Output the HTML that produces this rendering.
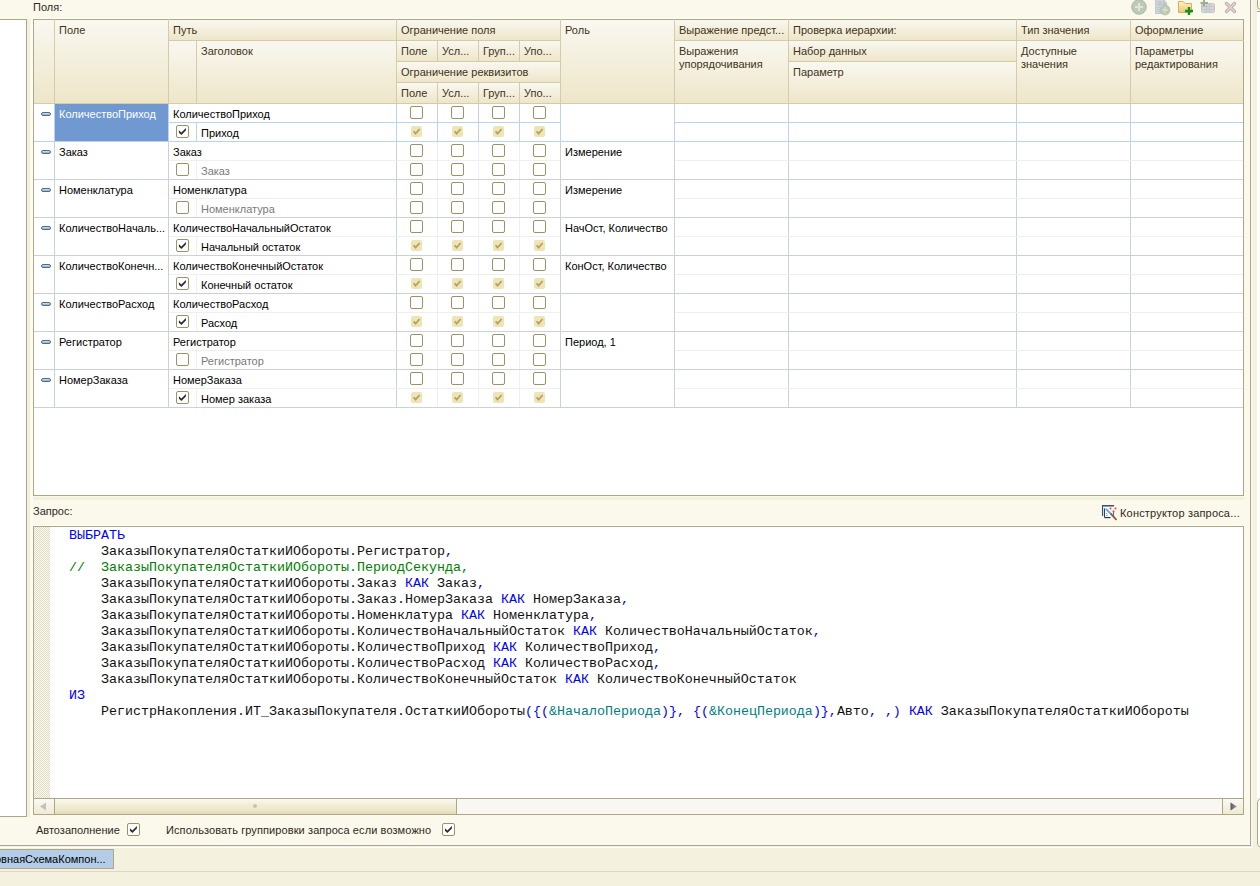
<!DOCTYPE html>
<html><head><meta charset="utf-8"><style>
*{margin:0;padding:0;box-sizing:border-box}
html,body{width:1260px;height:886px;overflow:hidden;background:#FBF9EB;font-family:"Liberation Sans",sans-serif;font-size:11px;color:#000}
.a{position:absolute}
.t{position:absolute;white-space:nowrap;line-height:13px;height:13px}
.hc{position:absolute;background:linear-gradient(#F9F8F0,#EEE6C9);color:#3A3018}
.cb{position:absolute;width:13px;height:13px;border:1px solid #9C9268;border-radius:2px;background:#fff}
.dc{position:absolute;width:11px;height:11px;border-radius:2px;background:#EEE4B5}
.mono{font-family:"Liberation Mono",monospace;font-size:13.333px;letter-spacing:0px;line-height:16px;white-space:pre;color:#111}
</style></head>
<body>
<div class="t" style="left:33px;top:1px;color:#30281A;">Поля:</div><div class="a" style="left:-1px;top:19px;width:28px;height:798px;background:#fff;border:1px solid #AFA783"></div><div class="a" style="left:27px;top:19px;width:4px;height:798px;background:linear-gradient(90deg,#F2EFDB,#F4F1DE 60%,#FBF9EC)"></div><div class="a" style="left:31px;top:19px;width:2px;height:798px;background:#FEFDF3"></div><div class="a" style="left:33px;top:19px;width:1211px;height:477px;background:#fff;border:1px solid #AFA783"></div><div class="hc" style="left:34px;top:20px;width:20px;height:83px"></div><div class="hc" style="left:55px;top:20px;width:113px;height:83px"></div><div class="a" style="left:59px;top:24px;line-height:13px;white-space:nowrap;color:#3F3318">Поле</div><div class="a" style="left:54px;top:19px;width:1px;height:85px;background:#D3CBAA"></div><div class="hc" style="left:169px;top:20px;width:227px;height:20px"></div><div class="a" style="left:173px;top:24px;line-height:13px;white-space:nowrap;color:#3F3318">Путь</div><div class="a" style="left:168px;top:19px;width:1px;height:22px;background:#D3CBAA"></div><div class="hc" style="left:169px;top:41px;width:27px;height:62px"></div><div class="a" style="left:168px;top:40px;width:1px;height:64px;background:#D3CBAA"></div><div class="a" style="left:168px;top:40px;width:29px;height:1px;background:#D3CBAA"></div><div class="hc" style="left:197px;top:41px;width:199px;height:62px"></div><div class="a" style="left:201px;top:45px;line-height:13px;white-space:nowrap;color:#3F3318">Заголовок</div><div class="a" style="left:196px;top:40px;width:1px;height:64px;background:#D3CBAA"></div><div class="a" style="left:196px;top:40px;width:201px;height:1px;background:#D3CBAA"></div><div class="hc" style="left:397px;top:20px;width:163px;height:20px"></div><div class="a" style="left:401px;top:24px;line-height:13px;white-space:nowrap;color:#3F3318">Ограничение поля</div><div class="a" style="left:396px;top:19px;width:1px;height:22px;background:#D3CBAA"></div><div class="hc" style="left:397px;top:41px;width:40px;height:20px"></div><div class="a" style="left:401px;top:45px;line-height:13px;white-space:nowrap;color:#3F3318">Поле</div><div class="a" style="left:396px;top:40px;width:1px;height:22px;background:#D3CBAA"></div><div class="a" style="left:396px;top:40px;width:42px;height:1px;background:#D3CBAA"></div><div class="hc" style="left:438px;top:41px;width:40px;height:20px"></div><div class="a" style="left:442px;top:45px;line-height:13px;white-space:nowrap;color:#3F3318">Усл...</div><div class="a" style="left:437px;top:40px;width:1px;height:22px;background:#D3CBAA"></div><div class="a" style="left:437px;top:40px;width:42px;height:1px;background:#D3CBAA"></div><div class="hc" style="left:479px;top:41px;width:40px;height:20px"></div><div class="a" style="left:483px;top:45px;line-height:13px;white-space:nowrap;color:#3F3318">Груп...</div><div class="a" style="left:478px;top:40px;width:1px;height:22px;background:#D3CBAA"></div><div class="a" style="left:478px;top:40px;width:42px;height:1px;background:#D3CBAA"></div><div class="hc" style="left:520px;top:41px;width:40px;height:20px"></div><div class="a" style="left:524px;top:45px;line-height:13px;white-space:nowrap;color:#3F3318">Упо...</div><div class="a" style="left:519px;top:40px;width:1px;height:22px;background:#D3CBAA"></div><div class="a" style="left:519px;top:40px;width:42px;height:1px;background:#D3CBAA"></div><div class="hc" style="left:397px;top:62px;width:163px;height:20px"></div><div class="a" style="left:401px;top:66px;line-height:13px;white-space:nowrap;color:#3F3318">Ограничение реквизитов</div><div class="a" style="left:396px;top:61px;width:1px;height:22px;background:#D3CBAA"></div><div class="a" style="left:396px;top:61px;width:165px;height:1px;background:#D3CBAA"></div><div class="hc" style="left:397px;top:83px;width:40px;height:20px"></div><div class="a" style="left:401px;top:87px;line-height:13px;white-space:nowrap;color:#3F3318">Поле</div><div class="a" style="left:396px;top:82px;width:1px;height:22px;background:#D3CBAA"></div><div class="a" style="left:396px;top:82px;width:42px;height:1px;background:#D3CBAA"></div><div class="hc" style="left:438px;top:83px;width:40px;height:20px"></div><div class="a" style="left:442px;top:87px;line-height:13px;white-space:nowrap;color:#3F3318">Усл...</div><div class="a" style="left:437px;top:82px;width:1px;height:22px;background:#D3CBAA"></div><div class="a" style="left:437px;top:82px;width:42px;height:1px;background:#D3CBAA"></div><div class="hc" style="left:479px;top:83px;width:40px;height:20px"></div><div class="a" style="left:483px;top:87px;line-height:13px;white-space:nowrap;color:#3F3318">Груп...</div><div class="a" style="left:478px;top:82px;width:1px;height:22px;background:#D3CBAA"></div><div class="a" style="left:478px;top:82px;width:42px;height:1px;background:#D3CBAA"></div><div class="hc" style="left:520px;top:83px;width:40px;height:20px"></div><div class="a" style="left:524px;top:87px;line-height:13px;white-space:nowrap;color:#3F3318">Упо...</div><div class="a" style="left:519px;top:82px;width:1px;height:22px;background:#D3CBAA"></div><div class="a" style="left:519px;top:82px;width:42px;height:1px;background:#D3CBAA"></div><div class="hc" style="left:561px;top:20px;width:113px;height:83px"></div><div class="a" style="left:565px;top:24px;line-height:13px;white-space:nowrap;color:#3F3318">Роль</div><div class="a" style="left:560px;top:19px;width:1px;height:85px;background:#D3CBAA"></div><div class="hc" style="left:675px;top:20px;width:113px;height:20px"></div><div class="a" style="left:679px;top:24px;line-height:13px;white-space:nowrap;color:#3F3318">Выражение предст...</div><div class="a" style="left:674px;top:19px;width:1px;height:22px;background:#D3CBAA"></div><div class="hc" style="left:675px;top:41px;width:113px;height:62px"></div><div class="a" style="left:679px;top:45px;line-height:13px;white-space:nowrap;color:#3F3318">Выражения<br>упорядочивания</div><div class="a" style="left:674px;top:40px;width:1px;height:64px;background:#D3CBAA"></div><div class="a" style="left:674px;top:40px;width:115px;height:1px;background:#D3CBAA"></div><div class="hc" style="left:789px;top:20px;width:227px;height:20px"></div><div class="a" style="left:793px;top:24px;line-height:13px;white-space:nowrap;color:#3F3318">Проверка иерархии:</div><div class="a" style="left:788px;top:19px;width:1px;height:22px;background:#D3CBAA"></div><div class="hc" style="left:789px;top:41px;width:227px;height:20px"></div><div class="a" style="left:793px;top:45px;line-height:13px;white-space:nowrap;color:#3F3318">Набор данных</div><div class="a" style="left:788px;top:40px;width:1px;height:22px;background:#D3CBAA"></div><div class="a" style="left:788px;top:40px;width:229px;height:1px;background:#D3CBAA"></div><div class="hc" style="left:789px;top:62px;width:227px;height:41px"></div><div class="a" style="left:793px;top:66px;line-height:13px;white-space:nowrap;color:#3F3318">Параметр</div><div class="a" style="left:788px;top:61px;width:1px;height:43px;background:#D3CBAA"></div><div class="a" style="left:788px;top:61px;width:229px;height:1px;background:#D3CBAA"></div><div class="hc" style="left:1017px;top:20px;width:113px;height:20px"></div><div class="a" style="left:1021px;top:24px;line-height:13px;white-space:nowrap;color:#3F3318">Тип значения</div><div class="a" style="left:1016px;top:19px;width:1px;height:22px;background:#D3CBAA"></div><div class="hc" style="left:1017px;top:41px;width:113px;height:62px"></div><div class="a" style="left:1021px;top:45px;line-height:13px;white-space:nowrap;color:#3F3318">Доступные<br>значения</div><div class="a" style="left:1016px;top:40px;width:1px;height:64px;background:#D3CBAA"></div><div class="a" style="left:1016px;top:40px;width:115px;height:1px;background:#D3CBAA"></div><div class="hc" style="left:1131px;top:20px;width:112px;height:20px"></div><div class="a" style="left:1135px;top:24px;line-height:13px;white-space:nowrap;color:#3F3318">Оформление</div><div class="a" style="left:1130px;top:19px;width:1px;height:22px;background:#D3CBAA"></div><div class="hc" style="left:1131px;top:41px;width:112px;height:62px"></div><div class="a" style="left:1135px;top:45px;line-height:13px;white-space:nowrap;color:#3F3318">Параметры<br>редактирования</div><div class="a" style="left:1130px;top:40px;width:1px;height:64px;background:#D3CBAA"></div><div class="a" style="left:1130px;top:40px;width:114px;height:1px;background:#D3CBAA"></div><div class="a" style="left:34px;top:103px;width:1209px;height:1px;background:#D3CBAA"></div><div class="a" style="left:54px;top:104px;width:1px;height:37px;background:#BDD2EE"></div><div class="a" style="left:168px;top:104px;width:1px;height:37px;background:#BDD2EE"></div><div class="a" style="left:396px;top:104px;width:1px;height:37px;background:#BDD2EE"></div><div class="a" style="left:560px;top:104px;width:1px;height:37px;background:#BDD2EE"></div><div class="a" style="left:674px;top:104px;width:1px;height:37px;background:#BDD2EE"></div><div class="a" style="left:788px;top:104px;width:1px;height:37px;background:#BDD2EE"></div><div class="a" style="left:1016px;top:104px;width:1px;height:37px;background:#BDD2EE"></div><div class="a" style="left:1130px;top:104px;width:1px;height:37px;background:#BDD2EE"></div><div class="a" style="left:437px;top:104px;width:1px;height:37px;background:#BDD2EE"></div><div class="a" style="left:478px;top:104px;width:1px;height:37px;background:#BDD2EE"></div><div class="a" style="left:519px;top:104px;width:1px;height:37px;background:#BDD2EE"></div><div class="a" style="left:196px;top:123px;width:1px;height:18px;background:#BDD2EE"></div><div class="a" style="left:169px;top:122px;width:391px;height:1px;background:#BDD2EE"></div><div class="a" style="left:675px;top:122px;width:568px;height:1px;background:#BDD2EE"></div><div class="a" style="left:34px;top:141px;width:1209px;height:1px;background:#BDD2EE"></div><div class="a" style="left:41px;top:112px;width:10px;height:4px;border-radius:2px;background:linear-gradient(#D8E6F2,#8FA9C0);border:1px solid #4F6D88"></div><div class="a" style="left:55px;top:104px;width:113px;height:37px;background:#7099D1"></div><div class="t" style="left:59px;top:108px;color:#fff;">КоличествоПриход</div><div class="t" style="left:173px;top:108px;">КоличествоПриход</div><div class="cb" style="left:176px;top:125px"><svg width="13" height="13" style="position:absolute;left:-1px;top:-1px"><path d="M2.9 5.2 L5.4 7.5 L9.9 2.9 L9.9 5.6 L5.4 10 L2.9 7.7 Z" fill="#2E2E2E"/></svg></div><div class="t" style="left:201px;top:127px;">Приход</div><div class="cb" style="left:410px;top:106px"></div><div class="dc" style="left:411px;top:126px"><svg width="11" height="11" style="position:absolute;left:0;top:0"><path d="M2.6 5.2 L4.6 7.6 L8.6 3.0" fill="none" stroke="#B2A262" stroke-width="1.7"/></svg></div><div class="cb" style="left:451px;top:106px"></div><div class="dc" style="left:452px;top:126px"><svg width="11" height="11" style="position:absolute;left:0;top:0"><path d="M2.6 5.2 L4.6 7.6 L8.6 3.0" fill="none" stroke="#B2A262" stroke-width="1.7"/></svg></div><div class="cb" style="left:492px;top:106px"></div><div class="dc" style="left:493px;top:126px"><svg width="11" height="11" style="position:absolute;left:0;top:0"><path d="M2.6 5.2 L4.6 7.6 L8.6 3.0" fill="none" stroke="#B2A262" stroke-width="1.7"/></svg></div><div class="cb" style="left:533px;top:106px"></div><div class="dc" style="left:534px;top:126px"><svg width="11" height="11" style="position:absolute;left:0;top:0"><path d="M2.6 5.2 L4.6 7.6 L8.6 3.0" fill="none" stroke="#B2A262" stroke-width="1.7"/></svg></div><div class="a" style="left:54px;top:142px;width:1px;height:37px;background:#CBD1D8"></div><div class="a" style="left:168px;top:142px;width:1px;height:37px;background:#CBD1D8"></div><div class="a" style="left:396px;top:142px;width:1px;height:37px;background:#CBD1D8"></div><div class="a" style="left:560px;top:142px;width:1px;height:37px;background:#CBD1D8"></div><div class="a" style="left:674px;top:142px;width:1px;height:37px;background:#CBD1D8"></div><div class="a" style="left:788px;top:142px;width:1px;height:37px;background:#CBD1D8"></div><div class="a" style="left:1016px;top:142px;width:1px;height:37px;background:#CBD1D8"></div><div class="a" style="left:1130px;top:142px;width:1px;height:37px;background:#CBD1D8"></div><div class="a" style="left:437px;top:142px;width:1px;height:37px;background:#EFEFEF"></div><div class="a" style="left:478px;top:142px;width:1px;height:37px;background:#EFEFEF"></div><div class="a" style="left:519px;top:142px;width:1px;height:37px;background:#EFEFEF"></div><div class="a" style="left:196px;top:161px;width:1px;height:18px;background:#EFEFEF"></div><div class="a" style="left:169px;top:160px;width:391px;height:1px;background:#EFEFEF"></div><div class="a" style="left:675px;top:160px;width:568px;height:1px;background:#EFEFEF"></div><div class="a" style="left:34px;top:179px;width:1209px;height:1px;background:#CBD1D8"></div><div class="a" style="left:41px;top:150px;width:10px;height:4px;border-radius:2px;background:linear-gradient(#D8E6F2,#8FA9C0);border:1px solid #4F6D88"></div><div class="t" style="left:59px;top:146px;">Заказ</div><div class="t" style="left:173px;top:146px;">Заказ</div><div class="cb" style="left:176px;top:163px"></div><div class="t" style="left:201px;top:165px;color:#7A7A7A;">Заказ</div><div class="cb" style="left:410px;top:144px"></div><div class="cb" style="left:410px;top:163px"></div><div class="cb" style="left:451px;top:144px"></div><div class="cb" style="left:451px;top:163px"></div><div class="cb" style="left:492px;top:144px"></div><div class="cb" style="left:492px;top:163px"></div><div class="cb" style="left:533px;top:144px"></div><div class="cb" style="left:533px;top:163px"></div><div class="t" style="left:565px;top:146px;">Измерение</div><div class="a" style="left:54px;top:180px;width:1px;height:37px;background:#CBD1D8"></div><div class="a" style="left:168px;top:180px;width:1px;height:37px;background:#CBD1D8"></div><div class="a" style="left:396px;top:180px;width:1px;height:37px;background:#CBD1D8"></div><div class="a" style="left:560px;top:180px;width:1px;height:37px;background:#CBD1D8"></div><div class="a" style="left:674px;top:180px;width:1px;height:37px;background:#CBD1D8"></div><div class="a" style="left:788px;top:180px;width:1px;height:37px;background:#CBD1D8"></div><div class="a" style="left:1016px;top:180px;width:1px;height:37px;background:#CBD1D8"></div><div class="a" style="left:1130px;top:180px;width:1px;height:37px;background:#CBD1D8"></div><div class="a" style="left:437px;top:180px;width:1px;height:37px;background:#EFEFEF"></div><div class="a" style="left:478px;top:180px;width:1px;height:37px;background:#EFEFEF"></div><div class="a" style="left:519px;top:180px;width:1px;height:37px;background:#EFEFEF"></div><div class="a" style="left:196px;top:199px;width:1px;height:18px;background:#EFEFEF"></div><div class="a" style="left:169px;top:198px;width:391px;height:1px;background:#EFEFEF"></div><div class="a" style="left:675px;top:198px;width:568px;height:1px;background:#EFEFEF"></div><div class="a" style="left:34px;top:217px;width:1209px;height:1px;background:#CBD1D8"></div><div class="a" style="left:41px;top:188px;width:10px;height:4px;border-radius:2px;background:linear-gradient(#D8E6F2,#8FA9C0);border:1px solid #4F6D88"></div><div class="t" style="left:59px;top:184px;">Номенклатура</div><div class="t" style="left:173px;top:184px;">Номенклатура</div><div class="cb" style="left:176px;top:201px"></div><div class="t" style="left:201px;top:203px;color:#7A7A7A;">Номенклатура</div><div class="cb" style="left:410px;top:182px"></div><div class="cb" style="left:410px;top:201px"></div><div class="cb" style="left:451px;top:182px"></div><div class="cb" style="left:451px;top:201px"></div><div class="cb" style="left:492px;top:182px"></div><div class="cb" style="left:492px;top:201px"></div><div class="cb" style="left:533px;top:182px"></div><div class="cb" style="left:533px;top:201px"></div><div class="t" style="left:565px;top:184px;">Измерение</div><div class="a" style="left:54px;top:218px;width:1px;height:37px;background:#CBD1D8"></div><div class="a" style="left:168px;top:218px;width:1px;height:37px;background:#CBD1D8"></div><div class="a" style="left:396px;top:218px;width:1px;height:37px;background:#CBD1D8"></div><div class="a" style="left:560px;top:218px;width:1px;height:37px;background:#CBD1D8"></div><div class="a" style="left:674px;top:218px;width:1px;height:37px;background:#CBD1D8"></div><div class="a" style="left:788px;top:218px;width:1px;height:37px;background:#CBD1D8"></div><div class="a" style="left:1016px;top:218px;width:1px;height:37px;background:#CBD1D8"></div><div class="a" style="left:1130px;top:218px;width:1px;height:37px;background:#CBD1D8"></div><div class="a" style="left:437px;top:218px;width:1px;height:37px;background:#EFEFEF"></div><div class="a" style="left:478px;top:218px;width:1px;height:37px;background:#EFEFEF"></div><div class="a" style="left:519px;top:218px;width:1px;height:37px;background:#EFEFEF"></div><div class="a" style="left:196px;top:237px;width:1px;height:18px;background:#EFEFEF"></div><div class="a" style="left:169px;top:236px;width:391px;height:1px;background:#EFEFEF"></div><div class="a" style="left:675px;top:236px;width:568px;height:1px;background:#EFEFEF"></div><div class="a" style="left:34px;top:255px;width:1209px;height:1px;background:#CBD1D8"></div><div class="a" style="left:41px;top:226px;width:10px;height:4px;border-radius:2px;background:linear-gradient(#D8E6F2,#8FA9C0);border:1px solid #4F6D88"></div><div class="t" style="left:59px;top:222px;">КоличествоНачаль...</div><div class="t" style="left:173px;top:222px;">КоличествоНачальныйОстаток</div><div class="cb" style="left:176px;top:239px"><svg width="13" height="13" style="position:absolute;left:-1px;top:-1px"><path d="M2.9 5.2 L5.4 7.5 L9.9 2.9 L9.9 5.6 L5.4 10 L2.9 7.7 Z" fill="#2E2E2E"/></svg></div><div class="t" style="left:201px;top:241px;">Начальный остаток</div><div class="cb" style="left:410px;top:220px"></div><div class="dc" style="left:411px;top:240px"><svg width="11" height="11" style="position:absolute;left:0;top:0"><path d="M2.6 5.2 L4.6 7.6 L8.6 3.0" fill="none" stroke="#B2A262" stroke-width="1.7"/></svg></div><div class="cb" style="left:451px;top:220px"></div><div class="dc" style="left:452px;top:240px"><svg width="11" height="11" style="position:absolute;left:0;top:0"><path d="M2.6 5.2 L4.6 7.6 L8.6 3.0" fill="none" stroke="#B2A262" stroke-width="1.7"/></svg></div><div class="cb" style="left:492px;top:220px"></div><div class="dc" style="left:493px;top:240px"><svg width="11" height="11" style="position:absolute;left:0;top:0"><path d="M2.6 5.2 L4.6 7.6 L8.6 3.0" fill="none" stroke="#B2A262" stroke-width="1.7"/></svg></div><div class="cb" style="left:533px;top:220px"></div><div class="dc" style="left:534px;top:240px"><svg width="11" height="11" style="position:absolute;left:0;top:0"><path d="M2.6 5.2 L4.6 7.6 L8.6 3.0" fill="none" stroke="#B2A262" stroke-width="1.7"/></svg></div><div class="t" style="left:565px;top:222px;">НачОст, Количество</div><div class="a" style="left:54px;top:256px;width:1px;height:37px;background:#CBD1D8"></div><div class="a" style="left:168px;top:256px;width:1px;height:37px;background:#CBD1D8"></div><div class="a" style="left:396px;top:256px;width:1px;height:37px;background:#CBD1D8"></div><div class="a" style="left:560px;top:256px;width:1px;height:37px;background:#CBD1D8"></div><div class="a" style="left:674px;top:256px;width:1px;height:37px;background:#CBD1D8"></div><div class="a" style="left:788px;top:256px;width:1px;height:37px;background:#CBD1D8"></div><div class="a" style="left:1016px;top:256px;width:1px;height:37px;background:#CBD1D8"></div><div class="a" style="left:1130px;top:256px;width:1px;height:37px;background:#CBD1D8"></div><div class="a" style="left:437px;top:256px;width:1px;height:37px;background:#EFEFEF"></div><div class="a" style="left:478px;top:256px;width:1px;height:37px;background:#EFEFEF"></div><div class="a" style="left:519px;top:256px;width:1px;height:37px;background:#EFEFEF"></div><div class="a" style="left:196px;top:275px;width:1px;height:18px;background:#EFEFEF"></div><div class="a" style="left:169px;top:274px;width:391px;height:1px;background:#EFEFEF"></div><div class="a" style="left:675px;top:274px;width:568px;height:1px;background:#EFEFEF"></div><div class="a" style="left:34px;top:293px;width:1209px;height:1px;background:#CBD1D8"></div><div class="a" style="left:41px;top:264px;width:10px;height:4px;border-radius:2px;background:linear-gradient(#D8E6F2,#8FA9C0);border:1px solid #4F6D88"></div><div class="t" style="left:59px;top:260px;">КоличествоКонечн...</div><div class="t" style="left:173px;top:260px;">КоличествоКонечныйОстаток</div><div class="cb" style="left:176px;top:277px"><svg width="13" height="13" style="position:absolute;left:-1px;top:-1px"><path d="M2.9 5.2 L5.4 7.5 L9.9 2.9 L9.9 5.6 L5.4 10 L2.9 7.7 Z" fill="#2E2E2E"/></svg></div><div class="t" style="left:201px;top:279px;">Конечный остаток</div><div class="cb" style="left:410px;top:258px"></div><div class="dc" style="left:411px;top:278px"><svg width="11" height="11" style="position:absolute;left:0;top:0"><path d="M2.6 5.2 L4.6 7.6 L8.6 3.0" fill="none" stroke="#B2A262" stroke-width="1.7"/></svg></div><div class="cb" style="left:451px;top:258px"></div><div class="dc" style="left:452px;top:278px"><svg width="11" height="11" style="position:absolute;left:0;top:0"><path d="M2.6 5.2 L4.6 7.6 L8.6 3.0" fill="none" stroke="#B2A262" stroke-width="1.7"/></svg></div><div class="cb" style="left:492px;top:258px"></div><div class="dc" style="left:493px;top:278px"><svg width="11" height="11" style="position:absolute;left:0;top:0"><path d="M2.6 5.2 L4.6 7.6 L8.6 3.0" fill="none" stroke="#B2A262" stroke-width="1.7"/></svg></div><div class="cb" style="left:533px;top:258px"></div><div class="dc" style="left:534px;top:278px"><svg width="11" height="11" style="position:absolute;left:0;top:0"><path d="M2.6 5.2 L4.6 7.6 L8.6 3.0" fill="none" stroke="#B2A262" stroke-width="1.7"/></svg></div><div class="t" style="left:565px;top:260px;">КонОст, Количество</div><div class="a" style="left:54px;top:294px;width:1px;height:37px;background:#CBD1D8"></div><div class="a" style="left:168px;top:294px;width:1px;height:37px;background:#CBD1D8"></div><div class="a" style="left:396px;top:294px;width:1px;height:37px;background:#CBD1D8"></div><div class="a" style="left:560px;top:294px;width:1px;height:37px;background:#CBD1D8"></div><div class="a" style="left:674px;top:294px;width:1px;height:37px;background:#CBD1D8"></div><div class="a" style="left:788px;top:294px;width:1px;height:37px;background:#CBD1D8"></div><div class="a" style="left:1016px;top:294px;width:1px;height:37px;background:#CBD1D8"></div><div class="a" style="left:1130px;top:294px;width:1px;height:37px;background:#CBD1D8"></div><div class="a" style="left:437px;top:294px;width:1px;height:37px;background:#EFEFEF"></div><div class="a" style="left:478px;top:294px;width:1px;height:37px;background:#EFEFEF"></div><div class="a" style="left:519px;top:294px;width:1px;height:37px;background:#EFEFEF"></div><div class="a" style="left:196px;top:313px;width:1px;height:18px;background:#EFEFEF"></div><div class="a" style="left:169px;top:312px;width:391px;height:1px;background:#EFEFEF"></div><div class="a" style="left:675px;top:312px;width:568px;height:1px;background:#EFEFEF"></div><div class="a" style="left:34px;top:331px;width:1209px;height:1px;background:#CBD1D8"></div><div class="a" style="left:41px;top:302px;width:10px;height:4px;border-radius:2px;background:linear-gradient(#D8E6F2,#8FA9C0);border:1px solid #4F6D88"></div><div class="t" style="left:59px;top:298px;">КоличествоРасход</div><div class="t" style="left:173px;top:298px;">КоличествоРасход</div><div class="cb" style="left:176px;top:315px"><svg width="13" height="13" style="position:absolute;left:-1px;top:-1px"><path d="M2.9 5.2 L5.4 7.5 L9.9 2.9 L9.9 5.6 L5.4 10 L2.9 7.7 Z" fill="#2E2E2E"/></svg></div><div class="t" style="left:201px;top:317px;">Расход</div><div class="cb" style="left:410px;top:296px"></div><div class="dc" style="left:411px;top:316px"><svg width="11" height="11" style="position:absolute;left:0;top:0"><path d="M2.6 5.2 L4.6 7.6 L8.6 3.0" fill="none" stroke="#B2A262" stroke-width="1.7"/></svg></div><div class="cb" style="left:451px;top:296px"></div><div class="dc" style="left:452px;top:316px"><svg width="11" height="11" style="position:absolute;left:0;top:0"><path d="M2.6 5.2 L4.6 7.6 L8.6 3.0" fill="none" stroke="#B2A262" stroke-width="1.7"/></svg></div><div class="cb" style="left:492px;top:296px"></div><div class="dc" style="left:493px;top:316px"><svg width="11" height="11" style="position:absolute;left:0;top:0"><path d="M2.6 5.2 L4.6 7.6 L8.6 3.0" fill="none" stroke="#B2A262" stroke-width="1.7"/></svg></div><div class="cb" style="left:533px;top:296px"></div><div class="dc" style="left:534px;top:316px"><svg width="11" height="11" style="position:absolute;left:0;top:0"><path d="M2.6 5.2 L4.6 7.6 L8.6 3.0" fill="none" stroke="#B2A262" stroke-width="1.7"/></svg></div><div class="a" style="left:54px;top:332px;width:1px;height:37px;background:#CBD1D8"></div><div class="a" style="left:168px;top:332px;width:1px;height:37px;background:#CBD1D8"></div><div class="a" style="left:396px;top:332px;width:1px;height:37px;background:#CBD1D8"></div><div class="a" style="left:560px;top:332px;width:1px;height:37px;background:#CBD1D8"></div><div class="a" style="left:674px;top:332px;width:1px;height:37px;background:#CBD1D8"></div><div class="a" style="left:788px;top:332px;width:1px;height:37px;background:#CBD1D8"></div><div class="a" style="left:1016px;top:332px;width:1px;height:37px;background:#CBD1D8"></div><div class="a" style="left:1130px;top:332px;width:1px;height:37px;background:#CBD1D8"></div><div class="a" style="left:437px;top:332px;width:1px;height:37px;background:#EFEFEF"></div><div class="a" style="left:478px;top:332px;width:1px;height:37px;background:#EFEFEF"></div><div class="a" style="left:519px;top:332px;width:1px;height:37px;background:#EFEFEF"></div><div class="a" style="left:196px;top:351px;width:1px;height:18px;background:#EFEFEF"></div><div class="a" style="left:169px;top:350px;width:391px;height:1px;background:#EFEFEF"></div><div class="a" style="left:675px;top:350px;width:568px;height:1px;background:#EFEFEF"></div><div class="a" style="left:34px;top:369px;width:1209px;height:1px;background:#CBD1D8"></div><div class="a" style="left:41px;top:340px;width:10px;height:4px;border-radius:2px;background:linear-gradient(#D8E6F2,#8FA9C0);border:1px solid #4F6D88"></div><div class="t" style="left:59px;top:336px;">Регистратор</div><div class="t" style="left:173px;top:336px;">Регистратор</div><div class="cb" style="left:176px;top:353px"></div><div class="t" style="left:201px;top:355px;color:#7A7A7A;">Регистратор</div><div class="cb" style="left:410px;top:334px"></div><div class="cb" style="left:410px;top:353px"></div><div class="cb" style="left:451px;top:334px"></div><div class="cb" style="left:451px;top:353px"></div><div class="cb" style="left:492px;top:334px"></div><div class="cb" style="left:492px;top:353px"></div><div class="cb" style="left:533px;top:334px"></div><div class="cb" style="left:533px;top:353px"></div><div class="t" style="left:565px;top:336px;">Период, 1</div><div class="a" style="left:54px;top:370px;width:1px;height:37px;background:#CBD1D8"></div><div class="a" style="left:168px;top:370px;width:1px;height:37px;background:#CBD1D8"></div><div class="a" style="left:396px;top:370px;width:1px;height:37px;background:#CBD1D8"></div><div class="a" style="left:560px;top:370px;width:1px;height:37px;background:#CBD1D8"></div><div class="a" style="left:674px;top:370px;width:1px;height:37px;background:#CBD1D8"></div><div class="a" style="left:788px;top:370px;width:1px;height:37px;background:#CBD1D8"></div><div class="a" style="left:1016px;top:370px;width:1px;height:37px;background:#CBD1D8"></div><div class="a" style="left:1130px;top:370px;width:1px;height:37px;background:#CBD1D8"></div><div class="a" style="left:437px;top:370px;width:1px;height:37px;background:#EFEFEF"></div><div class="a" style="left:478px;top:370px;width:1px;height:37px;background:#EFEFEF"></div><div class="a" style="left:519px;top:370px;width:1px;height:37px;background:#EFEFEF"></div><div class="a" style="left:196px;top:389px;width:1px;height:18px;background:#EFEFEF"></div><div class="a" style="left:169px;top:388px;width:391px;height:1px;background:#EFEFEF"></div><div class="a" style="left:675px;top:388px;width:568px;height:1px;background:#EFEFEF"></div><div class="a" style="left:34px;top:407px;width:1209px;height:1px;background:#CBD1D8"></div><div class="a" style="left:41px;top:378px;width:10px;height:4px;border-radius:2px;background:linear-gradient(#D8E6F2,#8FA9C0);border:1px solid #4F6D88"></div><div class="t" style="left:59px;top:374px;">НомерЗаказа</div><div class="t" style="left:173px;top:374px;">НомерЗаказа</div><div class="cb" style="left:176px;top:391px"><svg width="13" height="13" style="position:absolute;left:-1px;top:-1px"><path d="M2.9 5.2 L5.4 7.5 L9.9 2.9 L9.9 5.6 L5.4 10 L2.9 7.7 Z" fill="#2E2E2E"/></svg></div><div class="t" style="left:201px;top:393px;">Номер заказа</div><div class="cb" style="left:410px;top:372px"></div><div class="dc" style="left:411px;top:392px"><svg width="11" height="11" style="position:absolute;left:0;top:0"><path d="M2.6 5.2 L4.6 7.6 L8.6 3.0" fill="none" stroke="#B2A262" stroke-width="1.7"/></svg></div><div class="cb" style="left:451px;top:372px"></div><div class="dc" style="left:452px;top:392px"><svg width="11" height="11" style="position:absolute;left:0;top:0"><path d="M2.6 5.2 L4.6 7.6 L8.6 3.0" fill="none" stroke="#B2A262" stroke-width="1.7"/></svg></div><div class="cb" style="left:492px;top:372px"></div><div class="dc" style="left:493px;top:392px"><svg width="11" height="11" style="position:absolute;left:0;top:0"><path d="M2.6 5.2 L4.6 7.6 L8.6 3.0" fill="none" stroke="#B2A262" stroke-width="1.7"/></svg></div><div class="cb" style="left:533px;top:372px"></div><div class="dc" style="left:534px;top:392px"><svg width="11" height="11" style="position:absolute;left:0;top:0"><path d="M2.6 5.2 L4.6 7.6 L8.6 3.0" fill="none" stroke="#B2A262" stroke-width="1.7"/></svg></div><div class="a" style="left:33px;top:18px;width:1211px;height:1px;background:#FFFFF6"></div><div class="a" style="left:33px;top:525px;width:1211px;height:1px;background:#FFFFF6"></div><div class="a" style="left:33px;top:497px;width:1211px;height:3px;background:#F3F0DC"></div><div class="t" style="left:33px;top:505px;color:#30281A;">Запрос:</div><div class="t" style="left:1120px;top:507px;color:#30281A;letter-spacing:0.18px;">Конструктор запроса...</div><svg class="a" style="left:1098px;top:502px" width="22" height="20"><path d="M4.5 14 V3.5 H15.5 V4.5" fill="none" stroke="#3F5275" stroke-width="1.1"/><path d="M5 4 H15 V5 H5 Z" fill="#8FA0BC"/><rect x="5.2" y="5.5" width="1.6" height="8" fill="#CFE3F2"/><path d="M6.5 15.5 H12.5" stroke="#22365A" stroke-width="1.3"/><path d="M6.5 6.5 V15.5" stroke="#2A3E62" stroke-width="1.1"/><rect x="7" y="6.8" width="5" height="8.2" fill="#F3F9FD"/><path d="M8 11.5 H9.3 M8 13.5 H9.8" stroke="#8794AA" stroke-width="0.8"/><path d="M15.5 8.5 V14" stroke="#5B6F92" stroke-width="1.1"/><path d="M8.3 7.3 L13.2 12.2" stroke="#5AA5DD" stroke-width="1.7" stroke-linecap="round"/><path d="M13.2 12.2 L18 17.3" stroke="#8B5B2E" stroke-width="1.8" stroke-linecap="round"/><circle cx="12.5" cy="6.5" r="1" fill="#F04848"/><circle cx="17.5" cy="6.5" r="1" fill="#F04848"/><circle cx="15.5" cy="9.5" r="1" fill="#F04848"/></svg><div class="a" style="left:33px;top:526px;width:1211px;height:289px;background:#fff;border:1px solid #AFA783"></div><div class="a" style="left:34px;top:527px;width:16px;height:271px;background-color:#F1EEDC;background-image:repeating-conic-gradient(#E0DCC5 0 25%, #FBF9EE 0 50%);background-size:2px 2px"></div><div class="a mono" style="left:69px;top:528px"><span style="color:#0000FF">ВЫБРАТЬ</span>
    ЗаказыПокупателяОстаткиИОбороты.Регистратор<span style="color:#0000FF">,</span>
<span style="color:#008000">//  ЗаказыПокупателяОстаткиИОбороты.ПериодСекунда,</span>
    ЗаказыПокупателяОстаткиИОбороты.Заказ <span style="color:#0000FF">КАК</span> Заказ<span style="color:#0000FF">,</span>
    ЗаказыПокупателяОстаткиИОбороты.Заказ.НомерЗаказа <span style="color:#0000FF">КАК</span> НомерЗаказа<span style="color:#0000FF">,</span>
    ЗаказыПокупателяОстаткиИОбороты.Номенклатура <span style="color:#0000FF">КАК</span> Номенклатура<span style="color:#0000FF">,</span>
    ЗаказыПокупателяОстаткиИОбороты.КоличествоНачальныйОстаток <span style="color:#0000FF">КАК</span> КоличествоНачальныйОстаток<span style="color:#0000FF">,</span>
    ЗаказыПокупателяОстаткиИОбороты.КоличествоПриход <span style="color:#0000FF">КАК</span> КоличествоПриход<span style="color:#0000FF">,</span>
    ЗаказыПокупателяОстаткиИОбороты.КоличествоРасход <span style="color:#0000FF">КАК</span> КоличествоРасход<span style="color:#0000FF">,</span>
    ЗаказыПокупателяОстаткиИОбороты.КоличествоКонечныйОстаток <span style="color:#0000FF">КАК</span> КоличествоКонечныйОстаток
<span style="color:#0000FF">ИЗ</span>
    РегистрНакопления.ИТ_ЗаказыПокупателя.ОстаткиИОбороты<span style="color:#0000FF">({(</span><span style="color:#008080">&amp;НачалоПериода</span><span style="color:#0000FF">)},</span> <span style="color:#0000FF">{(</span><span style="color:#008080">&amp;КонецПериода</span><span style="color:#0000FF">)},</span>Авто<span style="color:#0000FF">,</span> <span style="color:#0000FF">,)</span> <span style="color:#0000FF">КАК</span> ЗаказыПокупателяОстаткиИОбороты</div><div class="a" style="left:34px;top:798px;width:1209px;height:1px;background:#AFA783"></div><div class="a" style="left:34px;top:799px;width:20px;height:15px;background:linear-gradient(#FBFAF4,#EFEAD3)"></div><div class="a" style="left:54px;top:799px;width:1px;height:15px;background:#AFA783"></div><svg class="a" style="left:39px;top:802px" width="8" height="9"><path d="M1 4.5 L7 0.5 L7 8.5 Z" fill="#C4C2B8"/></svg><div class="a" style="left:55px;top:799px;width:401px;height:15px;background:linear-gradient(#FAF9F0,#F2EDD6 40%,#EEE8CB 70%,#E2DBBA)"></div><div class="a" style="left:456px;top:799px;width:1px;height:15px;background:#AFA783"></div><div class="a" style="left:457px;top:799px;width:765px;height:15px;background:#F8F7F1"></div><div class="a" style="left:1222px;top:799px;width:1px;height:15px;background:#AFA783"></div><div class="a" style="left:1223px;top:799px;width:20px;height:15px;background:linear-gradient(#FBFAF4,#EFEAD3)"></div><svg class="a" style="left:1230px;top:802px" width="8" height="9"><defs><linearGradient id="ag"><stop offset="0" stop-color="#555"/><stop offset="1" stop-color="#A8A8A8"/></linearGradient></defs><path d="M0.5 0.5 L7 4.5 L0.5 8.5 Z" fill="url(#ag)"/></svg><div class="a" style="left:253px;top:804px;width:4px;height:4px;border-radius:2px;background:#C8C4B0"></div><div class="a" style="left:1250px;top:0px;width:1px;height:846px;background:#AFA783"></div><div class="a" style="left:0px;top:845px;width:1251px;height:1px;background:#AFA783"></div><div class="a" style="left:1251px;top:0px;width:2px;height:848px;background:#F6F6F8"></div><div class="a" style="left:0px;top:846px;width:1253px;height:1px;background:#ECECF1"></div><div class="a" style="left:0px;top:847px;width:1253px;height:1px;background:#FFFFFF"></div><div class="a" style="left:1253px;top:0px;width:7px;height:886px;background:#F4F2DE"></div><div class="a" style="left:0px;top:848px;width:1260px;height:38px;background:#F4F2DE"></div><div class="a" style="left:1257px;top:-10px;width:20px;height:20px;border:1px solid #AFA783;border-radius:4px;background:#FBF9EB"></div><div class="a" style="left:1257px;top:11px;width:3px;height:1px;background:#AFA783"></div><div class="a" style="left:1257px;top:12px;width:3px;height:786px;background:#fff"></div><div class="a" style="left:1257px;top:798px;width:20px;height:50px;border:1px solid #AFA783;border-radius:5px;background:#FFFFF9"></div><div class="t" style="left:36px;top:824px;color:#30281A;">Автозаполнение</div><div class="cb" style="left:127px;top:823px"><svg width="13" height="13" style="position:absolute;left:-1px;top:-1px"><path d="M2.9 5.2 L5.4 7.5 L9.9 2.9 L9.9 5.6 L5.4 10 L2.9 7.7 Z" fill="#2E2E2E"/></svg></div><div class="t" style="left:166px;top:824px;color:#30281A;letter-spacing:0.1px;">Использовать группировки запроса если возможно</div><div class="cb" style="left:442px;top:823px"><svg width="13" height="13" style="position:absolute;left:-1px;top:-1px"><path d="M2.9 5.2 L5.4 7.5 L9.9 2.9 L9.9 5.6 L5.4 10 L2.9 7.7 Z" fill="#2E2E2E"/></svg></div><div class="a" style="left:-1px;top:849px;width:115px;height:20px;background:#B3CDE8;border:1px solid #AFA783;overflow:hidden"><div class="t" style="left:-5px;top:3px">овнаяСхемаКомпон...</div></div><div class="a" style="left:0px;top:871px;width:1260px;height:1px;background:#DDD9C3"></div><svg class="a" style="left:1130px;top:0px" width="112" height="16">
<circle cx="9" cy="7" r="7.3" fill="#BCCBB3" stroke="#AAB3A6" stroke-width="0.9"/>
<path d="M9 3 V11 M5 7 H13" stroke="#E2E2DE" stroke-width="2.2"/>
<path d="M25.5 -1 H33 L36.5 3 V13.5 H25.5 Z" fill="#D1D4D6" stroke="#C2C8CD"/>
<path d="M33 0 L36 3.5 V5 H33 Z" fill="#B7C5D1"/>
<path d="M27.5 2.5 H32 M27.5 4.5 H32" stroke="#B9BEC4"/>
<path d="M27.5 7.5 H31 M27.5 9.5 H31 M27.5 11.5 H31" stroke="#B6C8DA"/>
<circle cx="35" cy="10" r="5" fill="#BACAB0" stroke="#AFBFA6" stroke-width="0.6"/>
<path d="M35 7.3 V12.7 M32.3 10 H37.7" stroke="#D9DBD4" stroke-width="1.8"/>
<defs><linearGradient id="fg" x1="0" y1="0" x2="0" y2="1"><stop offset="0" stop-color="#FBF3C8"/><stop offset="1" stop-color="#EACB6A"/></linearGradient></defs><path d="M48.5 1.5 H53 L55 3.5 H61.5 V12.5 H48.5 Z" fill="url(#fg)" stroke="#D3AF5E"/>
<path d="M59 7 V15 M55 11 H63" stroke="#1B8F1B" stroke-width="2.4"/>
<rect x="71.5" y="3.5" width="13" height="9" rx="1.8" fill="#D2D5D9" stroke="#C4C4C4"/>
<path d="M72 6.5 H84 M72 9.5 H84 M76.5 4 V12 M79.5 4 V12" stroke="#C4C4C4" stroke-width="1"/>
<path d="M74 0 V6.5 M70.5 3 H78" stroke="#9DAE98" stroke-width="2"/>
<path d="M96.5 3.5 L104.5 11.5 M104.5 3.5 L96.5 11.5" stroke="#C2AFAF" stroke-width="3.4" stroke-linecap="round"/>
<path d="M96.5 3.5 L104.5 11.5 M104.5 3.5 L96.5 11.5" stroke="#E2D8D6" stroke-width="1.2" stroke-linecap="round"/>
</svg>
</body></html>
